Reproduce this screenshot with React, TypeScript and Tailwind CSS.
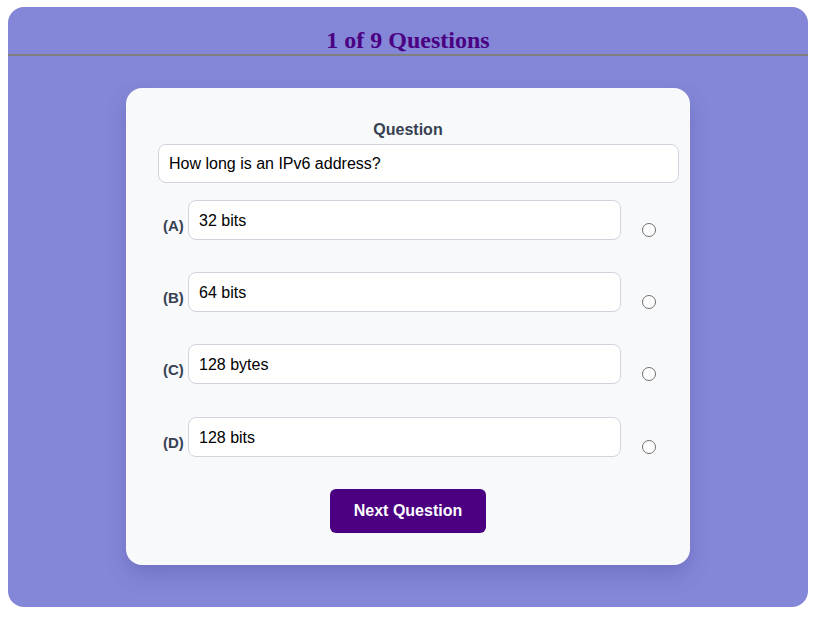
import React from "react";

const options = [
  { key: "A", text: "32 bits" },
  { key: "B", text: "64 bits" },
  { key: "C", text: "128 bytes" },
  { key: "D", text: "128 bits" },
];

export default function App() {
  return (
    <div className="w-[821px] h-[626px] bg-white" style={{ fontFamily: '"Liberation Sans", Arial, sans-serif' }}>
      <div className="ml-2 mt-[7px] w-[800px] h-[600px] rounded-[16px] bg-[#8486d8] flex flex-col items-center">
        <div className="w-full h-[47px] flex items-end justify-center pb-[2px]">
          <h1
            className="text-[24px] font-bold text-[#4b0082] leading-none"
            style={{ fontFamily: '"Liberation Serif", "Times New Roman", serif' }}
          >
            1 of 9 Questions
          </h1>
        </div>
        <div className="w-full h-[2px] bg-[#808080]" />
        <div className="mt-[32px] w-[564px] rounded-[16px] bg-[#f8f9fb] shadow-[0_10px_20px_rgba(60,60,140,0.25)] pt-[33px] pb-[32px] pl-[32px] flex flex-col">
          <div className="w-[500px] text-center text-[16px] font-bold text-[#374151] leading-[18px]">Question</div>
          <div className="mt-[5px] w-[521px] h-[39px] bg-white border border-[#d1d5db] rounded-[8px] px-[10px] flex items-center text-[16px] text-black">
            How long is an IPv6 address?
          </div>
          <div className="mt-[17px] flex flex-col">
            {options.map((o, i) => (
              <div key={o.key} className={`flex items-start ${i === 0 ? "" : i === 3 ? "mt-[33px]" : "mt-[32px]"}`}>
                <span className="ml-[5px] mt-[17px] w-[25px] text-[15px] font-bold text-[#374151] leading-[18px]">
                  ({o.key})
                </span>
                <div className="w-[433px] h-[40px] bg-white border border-[#d1d5db] rounded-[8px] px-[10px] pt-[10px] text-[16px] text-black leading-[20px]">
                  {o.text}
                </div>
                <span className="ml-[21px] mt-[23px] w-[14px] h-[14px] rounded-full border border-[#707070] bg-white" />
              </div>
            ))}
          </div>
          <div className="w-[500px] flex justify-center mt-[32px]">
            <button className="w-[156px] h-[44px] rounded-[6px] bg-[#4b0082] text-white text-[16px] font-bold">
              Next Question
            </button>
          </div>
        </div>
      </div>
    </div>
  );
}
